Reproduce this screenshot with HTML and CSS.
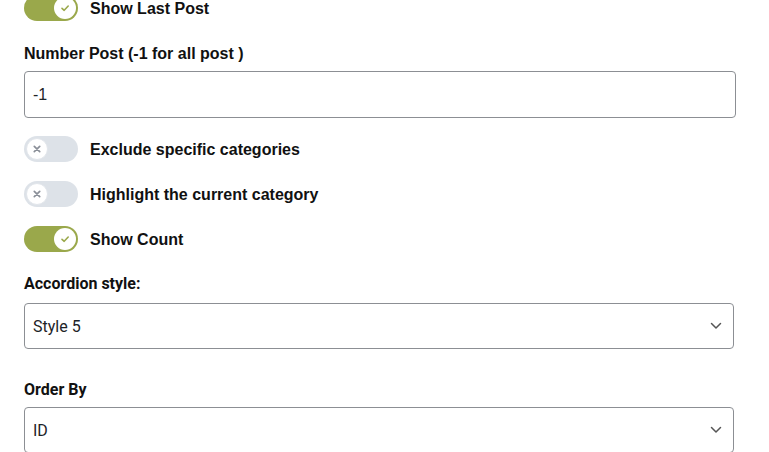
FILE: index.html
```html
<!DOCTYPE html>
<html>
<head>
<meta charset="utf-8">
<link rel="stylesheet" href="styles.css">
</head>
<body>
<div class="panel">
  <div class="toggle-row first">
    <span class="switch on"><span class="knob"><svg viewBox="0 0 12 12" width="12" height="12"><path d="M3 6.3 L5.2 8.3 L9.2 4" fill="none" stroke="#9aa84b" stroke-width="1.6" stroke-linecap="round" stroke-linejoin="round"/></svg></span></span>
    <span class="toggle-label">Show Last Post</span>
  </div>

  <div class="field-label top-label">Number Post (-1 for all post )</div>
  <div class="text-input">-1</div>

  <div class="toggle-row gap-after-input">
    <span class="switch off"><span class="knob"><svg viewBox="0 0 12 12" width="12" height="12"><path d="M3.3 3.3 L8.7 8.7 M8.7 3.3 L3.3 8.7" fill="none" stroke="#8a8f98" stroke-width="1.7" stroke-linecap="round"/></svg></span></span>
    <span class="toggle-label">Exclude specific categories</span>
  </div>
  <div class="toggle-row">
    <span class="switch off"><span class="knob"><svg viewBox="0 0 12 12" width="12" height="12"><path d="M3.3 3.3 L8.7 8.7 M8.7 3.3 L3.3 8.7" fill="none" stroke="#8a8f98" stroke-width="1.7" stroke-linecap="round"/></svg></span></span>
    <span class="toggle-label">Highlight the current category</span>
  </div>
  <div class="toggle-row">
    <span class="switch on"><span class="knob"><svg viewBox="0 0 12 12" width="12" height="12"><path d="M3 6.3 L5.2 8.3 L9.2 4" fill="none" stroke="#9aa84b" stroke-width="1.6" stroke-linecap="round" stroke-linejoin="round"/></svg></span></span>
    <span class="toggle-label">Show Count</span>
  </div>

  <div class="field-label cond accordion-label">Accordion style:</div>
  <div class="select accordion-select">
    <span>Style 5</span>
    <svg class="chev" viewBox="0 0 12 8" width="12" height="8"><path d="M1.5 1.5 L6 6 L10.5 1.5" fill="none" stroke="#555" stroke-width="1.5" stroke-linecap="round" stroke-linejoin="round"/></svg>
  </div>

  <div class="field-label cond order-label">Order By</div>
  <div class="select order-select">
    <span>ID</span>
    <svg class="chev" viewBox="0 0 12 8" width="12" height="8"><path d="M1.5 1.5 L6 6 L10.5 1.5" fill="none" stroke="#555" stroke-width="1.5" stroke-linecap="round" stroke-linejoin="round"/></svg>
  </div>
</div>
</body>
</html>
```

FILE: styles.css
```css
html, body {
  margin: 0;
  padding: 0;
  background: #ffffff;
  overflow: hidden;
}
body {
  font-family: "Liberation Sans", Arial, sans-serif;
  color: #1d2327;
}
.panel {
  width: 712px;
  padding-left: 24px;
  display: flex;
  flex-direction: column;
}
.toggle-row {
  display: flex;
  align-items: center;
  height: 26px;
  margin-top: 19px;
}
.toggle-row.first {
  margin-top: -5px;
}
.toggle-row.gap-after-input {
  margin-top: 18px;
}
.switch {
  box-sizing: border-box;
  width: 54px;
  height: 26px;
  border-radius: 13px;
  display: flex;
  align-items: center;
  padding: 0 2px;
  flex: none;
}
.switch.off {
  background: #dde2e8;
  justify-content: flex-start;
}
.switch.on {
  background: #9aa84b;
  justify-content: flex-end;
}
.knob {
  width: 22px;
  height: 22px;
  border-radius: 50%;
  background: #fff;
  box-sizing: border-box;
  display: flex;
  align-items: center;
  justify-content: center;
}
.switch.off .knob {
  border: 1px solid #e2e6eb;
}
.toggle-label {
  margin-left: 12px;
  margin-top: 2px;
  font-size: 16px;
  font-weight: bold;
  color: #111;
}
.field-label {
  font-size: 16px;
  font-weight: bold;
  line-height: 20px;
  color: #111;
}
.field-label.cond {
  font-family: Roboto, "Liberation Sans", sans-serif;
  font-size: 16px;
}
.top-label {
  margin-top: 23px;
}
.text-input {
  margin-top: 7px;
  box-sizing: border-box;
  height: 47px;
  border: 1px solid #8c8f94;
  border-radius: 4px;
  padding: 0 8px;
  display: flex;
  align-items: center;
  font-size: 16px;
  color: #1d2327;
}
.select {
  box-sizing: border-box;
  width: 710px;
  height: 46px;
  border: 1px solid #8c8f94;
  border-radius: 4px;
  padding: 0 11px 0 8px;
  display: flex;
  align-items: center;
  justify-content: space-between;
  font-family: Roboto, "Liberation Sans", sans-serif;
  font-size: 16px;
  color: #1d2327;
}
.accordion-label {
  margin-top: 22px;
}
.accordion-select {
  margin-top: 9px;
}
.order-label {
  margin-top: 31px;
}
.order-select {
  margin-top: 7px;
}
.chev {
  flex: none;
}
```
